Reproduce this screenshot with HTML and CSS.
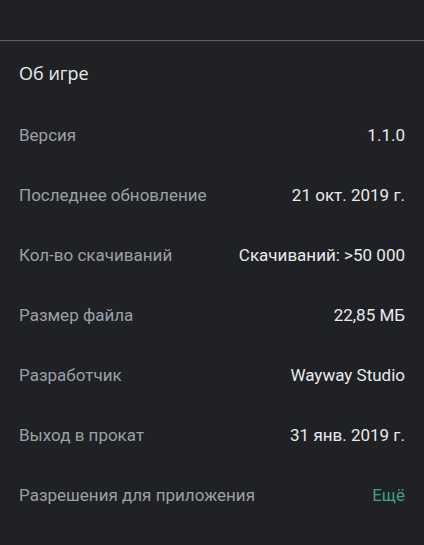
FILE: index.html
```html
<!DOCTYPE html>
<html lang="ru">
<head>
  <meta charset="UTF-8" />
  <meta name="viewport" content="width=device-width, initial-scale=1.0" />
  <title>Об игре</title>
  <link rel="stylesheet" href="styles.css">
</head>
<body>

<div class="top-area"></div>
<div class="divider"></div>

<section class="about">
  <h2>Об игре</h2>

  <div class="info-row"><span class="label">Версия</span><span class="value">1.1.0</span></div>
  <div class="info-row"><span class="label">Последнее обновление</span><span class="value">21 окт. 2019 г.</span></div>
  <div class="info-row"><span class="label">Кол-во скачиваний</span><span class="value">Скачиваний: &gt;50 000</span></div>
  <div class="info-row"><span class="label">Размер файла</span><span class="value">22,85 МБ</span></div>
  <div class="info-row"><span class="label">Разработчик</span><span class="value">Wayway Studio</span></div>
  <div class="info-row"><span class="label">Выход в прокат</span><span class="value">31 янв. 2019 г.</span></div>
  <div class="info-row"><span class="label">Разрешения для приложения</span><span class="value more">Ещё</span></div>
</section>

</body>
</html>
```

FILE: styles.css
```css
body {
  margin: 0;
  background: #202124;
  font-family: Roboto, "Noto Sans", sans-serif;
}

.top-area {
  height: 40px;
}

.divider {
  height: 1px;
  background: #5f6165;
  border-bottom: 1px solid #2a2b2e;
}

.about h2 {
  margin: 0;
  padding: 18px 19px 0;
  height: 45px;
  font-family: "Open Sans", "Noto Sans", sans-serif;
  font-weight: normal;
  font-size: 18px;
  line-height: 26px;
  color: #e8eaed;
}

.info-row {
  display: flex;
  justify-content: space-between;
  align-items: center;
  height: 60px;
  padding: 0 19px;
  font-size: 17px;
}

.label {
  color: #9aa0a6;
}

.value {
  color: #e8eaed;
}

.more {
  color: #3ea07c;
}
```
